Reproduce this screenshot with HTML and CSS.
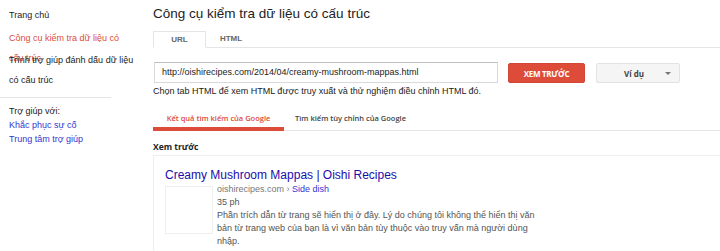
FILE: index.html
```html
<!DOCTYPE html>
<html lang="vi">
<head>
    <meta charset="UTF-8">
    <title>Công cụ kiểm tra dữ liệu có cấu trúc</title>
    <link rel="stylesheet" href="styles.css">
</head>
<body>
    <div class="page">
        <div class="sidebar">
            <a class="nav-item" href="#">Trang chủ</a>
            <a class="nav-item active" href="#">Công cụ kiểm tra dữ liệu có cấu trúc</a>
            <a class="nav-item" href="#">Trình trợ giúp đánh dấu dữ liệu có cấu trúc</a>
            <div class="divider"></div>
            <div class="help-title">Trợ giúp với:</div>
            <a class="help-link" href="#">Khắc phục sự cố</a>
            <a class="help-link" href="#">Trung tâm trợ giúp</a>
        </div>

        <div class="main">
            <h1>Công cụ kiểm tra dữ liệu có cấu trúc</h1>

            <div class="tabs">
                <div class="tab selected">URL</div>
                <div class="tab">HTML</div>
            </div>

            <div class="fetch-row">
                <input class="url-input" type="text" value="http://oishirecipes.com/2014/04/creamy-mushroom-mappas.html">
                <button class="btn-preview">XEM TRƯỚC</button>
                <div class="dropdown">
                    <span>Ví dụ</span>
                    <span class="caret"></span>
                </div>
            </div>
            <p class="hint">Chọn tab HTML để xem HTML được truy xuất và thử nghiệm điều chỉnh HTML đó.</p>

            <div class="subtabs">
                <div class="subtab selected">Kết quả tìm kiếm của Google</div>
                <div class="subtab">Tìm kiếm tùy chỉnh của Google</div>
            </div>

            <h2>Xem trước</h2>

            <div class="preview">
                <a class="result-title" href="#">Creamy Mushroom Mappas | Oishi Recipes</a>
                <div class="result-body">
                    <div class="thumb"></div>
                    <div class="result-text">
                        <div class="result-url">oishirecipes.com › <span class="crumb">Side dish</span></div>
                        <div>35 ph</div>
                        <div class="snippet">Phần trích dẫn từ trang sẽ hiển thị ở đây. Lý do chúng tôi không thể hiển thị văn bản từ trang web của bạn là vì văn bản tùy thuộc vào truy vấn mà người dùng nhập.</div>
                    </div>
                </div>
            </div>
        </div>
    </div>
</body>
</html>
```

FILE: styles.css
```css
* {
    margin: 0;
    padding: 0;
    box-sizing: border-box;
}

body {
    font-family: "Liberation Sans", Arial, sans-serif;
    font-size: 9px;
    color: #222;
    background: #fff;
    overflow: hidden;
}

.page {
    display: flex;
}

/* left navigation */
.sidebar {
    width: 153px;
    flex-shrink: 0;
    padding-top: 5px;
}

.nav-item {
    display: block;
    width: 135px;
    padding-left: 9px;
    height: 22px;
    line-height: 20px;
    color: #222;
    text-decoration: none;
}

.nav-item:first-child {
    height: 23px;
}

.nav-item.active {
    color: #dd4b39;
}

.nav-item:nth-child(3) {
    height: 46px;
}

.divider {
    width: 111px;
    border-top: 1px solid #e5e5e5;
    margin: 1px 0 6px;
}

.help-title,
.help-link {
    display: block;
    padding-left: 9px;
    line-height: 14px;
    color: #222;
}

.help-link {
    color: #3636d0;
    text-decoration: none;
}

/* main column */
.main {
    flex: 1;
    min-width: 0;
}

h1 {
    font-size: 13.5px;
    font-weight: normal;
    line-height: 18px;
    margin-top: 5px;
    color: #222;
}

.tabs {
    display: flex;
    margin-top: 8px;
    height: 17px;
    border-bottom: 1px solid #e5e5e5;
}

.tab {
    width: 53px;
    font-size: 8px;
    font-weight: bold;
    color: #666;
    text-align: center;
    line-height: 16px;
}

.tab.selected {
    border: 1px solid #e5e5e5;
    border-bottom: 1px solid #fff;
    height: 17px;
}

.tab:nth-child(2) {
    width: 50px;
}

.fetch-row {
    display: flex;
    align-items: center;
    margin-top: 13px;
}

.url-input {
    width: 344px;
    height: 21px;
    margin-left: 1px;
    border: 1px solid #d9d9d9;
    border-top-color: #c0c0c0;
    padding: 0 7px;
    font-family: "Liberation Sans", Arial, sans-serif;
    font-size: 9px;
    color: #222;
    outline: none;
}

.btn-preview {
    width: 77px;
    height: 20px;
    margin-left: 10px;
    margin-top: 2px;
    background: #dd4b39;
    border: 1px solid #d14836;
    border-radius: 2px;
    color: #fff;
    font-family: "Open Sans", "Liberation Sans", sans-serif;
    font-size: 8px;
    font-weight: bold;
    letter-spacing: -0.3px;
}

.dropdown {
    display: flex;
    align-items: center;
    justify-content: center;
    position: relative;
    width: 84px;
    height: 20px;
    margin-left: 11px;
    margin-top: 2px;
    padding-right: 8px;
    background: #f5f5f5;
    border: 1px solid #e3e3e3;
    border-radius: 2px;
    font-family: "Open Sans", "Liberation Sans", sans-serif;
    font-size: 8px;
    font-weight: bold;
    color: #444;
}

.caret {
    position: absolute;
    right: 8px;
    top: 8px;
    border-left: 3px solid transparent;
    border-right: 3px solid transparent;
    border-top: 3px solid #777;
}

.hint {
    font-size: 9px;
    line-height: 14px;
    margin-top: 1px;
    color: #222;
}

.subtabs {
    display: flex;
    margin-top: 13px;
    border-bottom: 1px solid #e5e5e5;
}

.subtab {
    font-family: "Open Sans", "Liberation Sans", sans-serif;
    font-size: 7.5px;
    font-weight: 600;
    color: #444;
    line-height: 14px;
    padding: 0 11px 2px;
}

.subtab.selected {
    width: 131px;
    padding-left: 0;
    padding-right: 0;
    text-align: center;
    color: #dd4b39;
    border-bottom: 4px solid #dd4b39;
    margin-bottom: -1px;
}

h2 {
    font-family: "Open Sans", "Liberation Sans", sans-serif;
    font-size: 8.5px;
    font-weight: bold;
    line-height: 14px;
    margin-top: 9px;
    color: #222;
}

.preview {
    margin-top: 1px;
    border-top: 1px solid #eee;
    border-left: 1px solid #eee;
    padding: 11px 0 0 11px;
    height: 120px;
}

.result-title {
    display: block;
    font-size: 12px;
    line-height: 16px;
    color: #1a0dab;
    text-decoration: none;
}

.result-body {
    display: flex;
}

.thumb {
    width: 48px;
    height: 48px;
    border: 1px solid #eee;
    flex-shrink: 0;
    margin-top: 3px;
}

.result-text {
    margin-left: 4px;
    width: 324px;
    line-height: 13px;
    color: #545454;
}

.result-url {
    color: #777;
}

.crumb {
    color: #3636d0;
}
```
